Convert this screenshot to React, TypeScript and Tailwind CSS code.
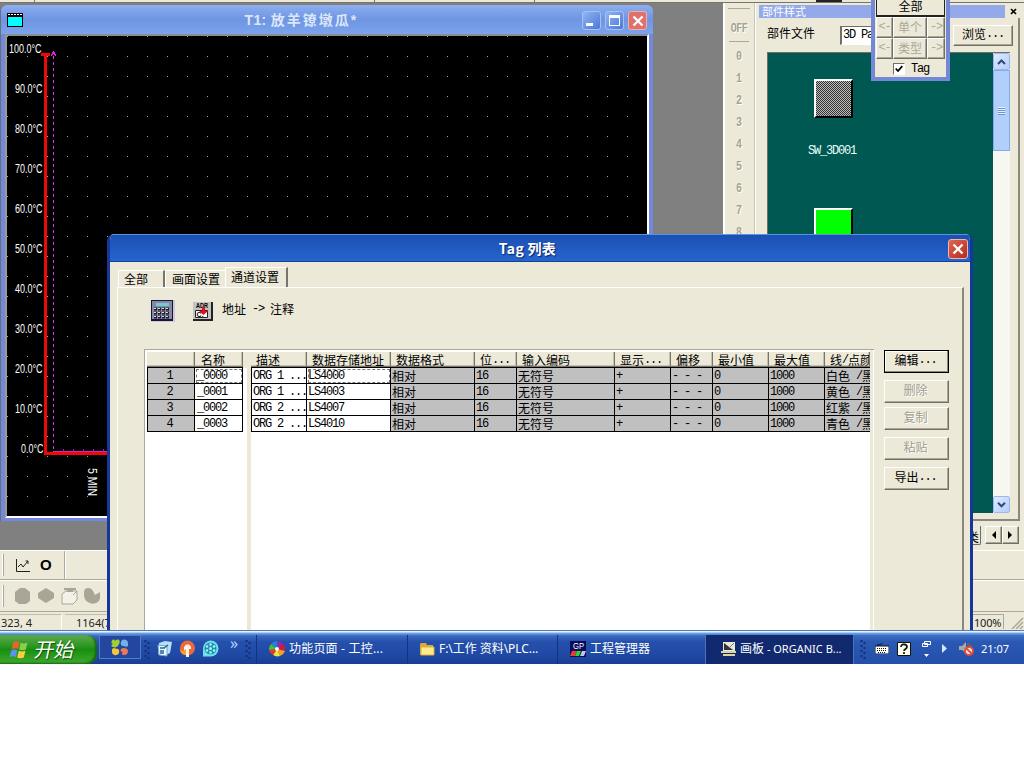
import React from "react";

const CJK = "font-['Liberation_Mono','Noto_Sans_CJK_SC',monospace]";
const RAISED =
  "border border-t-white border-l-white border-r-[#716f64] border-b-[#716f64] shadow-[inset_-1px_-1px_0_#aca899]";

/** Song-style text: 12px full-width characters with 6px half-width ones. */
function Song({ children, className = "" }: { children: string; className?: string }) {
  const runs = children.match(/[\x00-\x7f]+|[^\x00-\x7f]+/g) ?? [];
  return (
    <span className={`inline-flex shrink-0 items-center whitespace-pre leading-[14px] ${className}`}>
      {runs.map((run, i) =>
        /^[\x00-\x7f]/.test(run) ? (
          <span key={i} className="pt-px font-['Liberation_Mono',monospace] text-[12px] leading-[13px] tracking-[-1.2px]">{run}</span>
        ) : (
          <span key={i} className="font-['Noto_Sans_CJK_SC',sans-serif] text-[12px]">{run}</span>
        )
      )}
    </span>
  );
}

function Cross({ className = "" }: { className?: string }) {
  return (
    <svg viewBox="0 0 12 12" className={className}>
      <path d="M1.5 1.5 10.5 10.5M10.5 1.5 1.5 10.5" stroke="#fff" strokeWidth="2.3" />
    </svg>
  );
}

const SCALE = ["100.0", "90.0", "80.0", "70.0", "60.0", "50.0", "40.0", "30.0", "20.0", "10.0", "0.0"];

function TrendChart() {
  return (
    <svg width="640" height="480" viewBox="0 0 640 480" className="block bg-black">
      <defs>
        <pattern id="dots" width="20" height="20" patternUnits="userSpaceOnUse">
          <rect width="1" height="1" fill="#a8a89c" />
        </pattern>
      </defs>
      <rect width="640" height="480" fill="url(#dots)" />
      <g fill="#fff" fontFamily="Liberation Sans, sans-serif" fontSize="12">
        {SCALE.map((s, i) => (
          <text
            key={s}
            x={i === 0 ? 2 : i === 10 ? 14 : 8}
            y={17 + i * 40}
            textLength={i === 0 ? 32.5 : i === 10 ? 22.5 : 27.5}
            lengthAdjust="spacingAndGlyphs"
          >
            {`${s}°C`}
          </text>
        ))}
        <text transform="translate(81 432) rotate(90)" textLength="28" lengthAdjust="spacingAndGlyphs">5 MIN</text>
      </g>
      <g shapeRendering="crispEdges" fill="none">
        <path d="M34 18.5h9M38.5 18v401M37 417.5h65" stroke="#f00808" strokeWidth="3" />
        <path d="M46.5 20v394" stroke="#e030e8" strokeDasharray="3 3" />
        <path d="M46 415.5h56" stroke="#e020d0" />
        <path d="M46 15.500h1M45 16.500h3M45 17.500h3M44 18.500h2M47 18.500h2M44 19.500h1M48 19.500h1" stroke="#e020e0" />
        <path d="M56.5 413v4M66.5 413v4M76.5 413v4M86.5 413v4M96.5 413v4" stroke="#b018b0" />
      </g>
    </svg>
  );
}

function TrendWindow() {
  const btn = "flex h-[19px] w-[19px] rounded-[3px] border border-[#a9c0f3] bg-gradient-to-br from-[#8fb5f4] to-[#4c78d6]";
  return (
    <div className="mt-[2px] h-[516px] w-[653px] rounded-t-[6px] border-l border-[#6b6f78] bg-[#7288dc]">
      <div className="flex h-[29px] items-center rounded-t-[6px] bg-gradient-to-b from-[#8caef0] via-[#6f95e2] to-[#7aa4ec] pl-[6px] pr-[6px]">
        <svg width="16" height="14" viewBox="0 0 16 14">
          <path d="M0 0h16v14H0z" fill="#000" />
          <path d="M1 4h14v9H1z" fill="#0ff" />
          <path d="M1 1.5h14" stroke="#fff" strokeDasharray="2 1" />
        </svg>
        <div className="flex-1 whitespace-pre pr-[4px] pt-[2px] text-center font-['Liberation_Sans','Noto_Sans_CJK_SC',sans-serif] text-[14px] font-bold tracking-[0.3px] text-[#dce7fb]">
          T1: <span className="tracking-[2px]">放羊镣墩瓜</span>*
        </div>
        <div className="flex gap-[4px] pt-[2px]">
          <div className={`${btn} items-end pb-[3px] pl-[3px]`}><div className="h-[3px] w-[7px] bg-white" /></div>
          <div className={`${btn} items-center justify-center`}><div className="h-[11px] w-[11px] border border-t-[3px] border-white" /></div>
          <div className="flex h-[19px] w-[19px] items-center justify-center rounded-[3px] border border-[#f0b0a8] bg-[#e0706c]"><Cross className="h-[12px] w-[12px]" /></div>
        </div>
      </div>
      <div className="ml-[4px] w-[644px] border-b-2 border-l-2 border-r-2 border-t-2 border-b-white border-l-[#9a9a94] border-r-white border-t-[#8c8f92]">
        <TrendChart />
      </div>
    </div>
  );
}

function StateColumn() {
  return (
    <div className="flex h-full w-[32px] shrink-0 flex-col items-center border-l-2 border-r border-l-white border-r-[#c9c5b2] pr-px pt-[5px] font-['Liberation_Mono',monospace] text-[10px] font-bold text-[#a5a293]">
      <div className="h-px w-[22px] bg-[#aca899]" />
      <div className="mt-[7px] flex h-[24px] items-center"><span className="scale-y-125 tracking-[-0.5px] [text-shadow:1px_1px_0_#fff]">OFF</span></div>
      <div className="mb-[4px] mt-px h-px w-[20px] bg-[#aca899]" />
      {["0", "1", "2", "3", "4", "5", "6", "7", "8", "9"].map((n) => (
        <div key={n} className="-mt-px mb-px flex h-[22px] items-center"><span className="scale-y-125 [text-shadow:1px_1px_0_#fff]">{n}</span></div>
      ))}
    </div>
  );
}

function ScrollButton({ down = false }: { down?: boolean }) {
  return (
    <div className="flex h-[17px] w-[17px] items-center justify-center rounded-[2px] border border-[#9ab8ee] bg-gradient-to-br from-[#e0ebfe] to-[#b4cdf8]">
      <svg width="9" height="6" viewBox="0 0 9 6"><path d={down ? "M1 .8 4.5 4.3 8 .8" : "M1 5 4.5 1.5 8 5"} fill="none" stroke="#2b4a86" strokeWidth="2" /></svg>
    </div>
  );
}

function PartsPanel() {
  return (
    <div className="flex h-[547px] w-[269px] flex-col border-l border-white pl-[3px]">
      <div className="mt-[2px] flex h-[13px] items-center">
        <div className="flex h-[13px] w-[246px] items-center bg-[#93a9ea] pl-[3px]">
          <span className="font-['Noto_Sans_CJK_SC',sans-serif] text-[11px] leading-[13px] text-white">部件样式</span>
        </div>
        <svg width="7" height="7" viewBox="0 0 7 7" className="ml-[5px]"><path d="M1 1 6 6M6 1 1 6" stroke="#000" strokeWidth="1.7" /></svg>
      </div>
      <div className="flex h-[503px] w-[261px] flex-col border-b-2 border-r-2 border-b-[#8b887b] border-r-[#8b887b] pl-[8px]">
        <div className="flex h-[34px] items-center">
          <Song className="-mt-[4px] w-[73px]">部件文件</Song>
          <div className="flex h-[19px] w-[80px] items-center overflow-hidden border border-l-2 border-[#716f64] border-b-white border-r-white bg-white pl-[1px]"><Song>3D Parts</Song></div>
          <div className={`ml-[33px] flex h-[21px] w-[60px] items-center justify-center pb-[2px] ${RAISED}`}><Song>浏览...</Song></div>
        </div>
        <div className="flex h-[461px] w-[243px] border-l border-t border-[#716f64]">
          <div className="flex w-[225px] flex-col bg-[#005852] pl-[46px] pt-[26px]">
            <div className="h-[39px] w-[39px] border-2 border-b-black border-l-white border-r-black border-t-white bg-[#777] bg-[conic-gradient(#333_25%,#bdbdbd_0_50%,#333_0_75%,#bdbdbd_0)] bg-[length:2px_2px]" />
            <Song className="-ml-[6px] mt-[26px] text-[#e8fffa]">SW_3D001</Song>
            <div className="mt-[50px] h-[39px] w-[39px] border-2 border-b-black border-l-white border-r-black border-t-white bg-[#00ff00]" />
          </div>
          <div className="flex w-[17px] flex-col justify-between bg-[#f7f7f2]">
            <div>
              <ScrollButton />
              <div className="flex h-[81px] w-[17px] flex-col items-center justify-center border border-[#88a9ec] bg-[#b1cffb]">
                {[0, 1, 2, 3].map((i) => <div key={i} className="h-[2px] w-[7px] border-b border-[#6f92d8] bg-[#e6f0ff]" />)}
              </div>
            </div>
            <ScrollButton down />
          </div>
        </div>
      </div>
      <div className="mt-[5px] flex h-[20px] items-start">
        <div className="ml-[204px] h-[19px] w-[18px] overflow-hidden rounded-b-[2px] border-b border-r border-[#716f64]"><Song className="pl-[4px]">类</Song></div>
        <div className="ml-[4px] flex h-[18px]">
          <div className={`flex w-[17px] items-center justify-center ${RAISED}`}><svg width="5" height="8"><path d="M5 0v8L1 4z" /></svg></div>
          <div className={`flex w-[17px] items-center justify-center ${RAISED}`}><svg width="5" height="8"><path d="M0 0v8l4-4z" /></svg></div>
        </div>
      </div>
    </div>
  );
}

function Palette() {
  const cell = `flex h-full items-center justify-center text-[#aca899] pb-px ${RAISED}`;
  return (
    <div className="absolute left-[871px] top-0 h-[81px] w-[79px] border-x-4 border-b-4 border-[#7488d8] bg-[#ece9d8] px-px">
      <div className="flex h-[17px] items-center justify-center border-x border-b-2 border-[#222] bg-[#ece9d8] pb-[3px]"><Song>全部</Song></div>
      {["单个", "类型"].map((t) => (
        <div key={t} className="flex h-[21px] w-[69px]">
          <div className={`${cell} w-[17px]`}><Song>{"<-"}</Song></div>
          <div className={`${cell} w-[34px]`}><Song>{t}</Song></div>
          <div className={`${cell} w-[18px]`}><Song>{"->"}</Song></div>
        </div>
      ))}
      <div className="flex h-[18px] items-center pl-[17px] pt-[2px]">
        <div className="flex h-[12px] w-[12px] items-center justify-center border border-l-[#716f64] border-t-[#716f64] border-b-white border-r-white bg-white">
          <svg width="8" height="8" viewBox="0 0 8 8"><path d="M.7 3.5 3 6 7.3 1.2" fill="none" stroke="#000" strokeWidth="1.8" /></svg>
        </div>
        <Song className="ml-[6px]">Tag</Song>
      </div>
    </div>
  );
}

function AppFooter() {
  return (
    <div className="flex h-[80px] flex-col border-t border-white bg-[#ece9d8]">
      <div className="flex h-[29px] items-center border-b border-[#aca899]">
        <div className="ml-[2px] h-[22px] w-[2px] border-r border-[#aca899] bg-white" />
        <svg width="14" height="13" viewBox="0 0 14 13" className="ml-[12px]"><path d="M.5 0v12.5H14M2 8l3-3 2 3 5-6M9.500 2H12v3" fill="none" stroke="#222" /></svg>
        <span className="ml-[10px] w-[24px] font-['Liberation_Sans',sans-serif] text-[15px] font-bold leading-[16px]">O</span>
        <div className="h-full w-[2px] border-r border-white bg-[#aca899]" />
      </div>
      <div className="flex h-[32px] items-center border-b border-[#aca899] border-t border-t-white">
        <div className="ml-[2px] h-[22px] w-[2px] border-r border-[#aca899] bg-white" />
        <svg width="104" height="18" viewBox="0 0 104 18" className="ml-[10px]" fill="#aaa697">
          <path d="M1 5 6 1h5l5 4v9l-4 3H5l-4-3zM24 6l8-5 8 5v5l-8 5-8-5z" />
          <path d="M48 7l4-3h11v9l-4 4H48zM59 8l4-4" fill="#f4f2e8" stroke="#aaa697" />
          <path d="M50 1h12v2H50zM53 3h6v2h-6z" />
          <path d="M70 5c0-5 7-5 9-1l2 4 5-3v6c-1 6-8 7-12 4-4-2-4-6-4-10zM94 1h2v16h-2z" />
        </svg>
      </div>
      <div className="flex h-[18px] items-center font-['Noto_Sans','Open_Sans',sans-serif] text-[11px] leading-[14px] text-[#222]">
        <div className="flex h-[15px] w-[62px] items-center border-r border-t border-[#c1bda8] border-r-white pl-px pt-[2px]">323, 4</div>
        <div className="ml-[3px] flex h-[15px] w-[908px] items-center border-t border-[#c1bda8] pl-[11px] pt-[2px]">1164(734)</div>
        <div className="flex h-[15px] w-[31px] items-center border-r border-t border-[#aca899] pl-px pt-[2px] tracking-[-0.2px]">100%</div>
        <svg width="19" height="16" className="ml-px"><path d="M7 16 18 5M11 16l7-7M15 16l3-3" stroke="#aca899" strokeWidth="1.5" /></svg>
      </div>
    </div>
  );
}

const HEAD = ["描述", "数据存储地址", "数据格式", "位...", "输入编码", "显示...", "偏移", "最小值", "最大值", "线/点颜"];
const ROWS = [
  ["_0000", "ORG 1 ...", "LS4000", "白色 /黑"],
  ["_0001", "ORG 1 ...", "LS4003", "黄色 /黑"],
  ["_0002", "ORG 2 ...", "LS4007", "红紫 /黑"],
  ["_0003", "ORG 2 ...", "LS4010", "青色 /黑"],
];

function HeadCell({ text, className = "" }: { text: string; className?: string }) {
  return (
    <div className={`flex h-[15px] items-center overflow-x-clip border-b border-r border-[#77746a] bg-[#ece9d8] pt-px shadow-[inset_-1px_-1px_0_#c5c1ae] ${className}`}>
      <Song>{text}</Song>
    </div>
  );
}

function TagGrid() {
  return (
    <div className="flex h-[281px] w-[730px] border-l border-t border-[#aca899] bg-[#ece9d8]">
      <div className="flex w-[725px] bg-white pl-[2px] pt-[2px]">
        <div className="w-[96px]">
          <div className="grid grid-cols-[48px_48px]">
            <HeadCell text="" />
            <HeadCell text="名称" className="pl-[6px]" />
          </div>
          <div className="border-l border-t border-black">
            {ROWS.map((r, i) => (
              <div key={r[0]} className="grid h-[16px] grid-cols-[47px_48px]">
                <div className="flex items-center justify-center border-b border-r border-black bg-[#c0c0c0] pr-[3px]"><Song>{String(i + 1)}</Song></div>
                <div className={`flex items-center border-b border-r border-black pl-[2px] ${i === 0 ? "outline-1 outline-dashed -outline-offset-2 outline-[#777]" : ""}`}><Song>{r[0]}</Song></div>
              </div>
            ))}
          </div>
        </div>
        <div className="flex w-[8px] flex-col">
          <div className="h-[16px] bg-[#ece9d8]" />
          <div className="ml-[4px] w-[4px] flex-1 bg-[#ece9d8]" />
        </div>
        <div className="w-[619px] overflow-hidden">
          <div className="grid grid-cols-[56px_84px_84px_42px_98px_56px_42px_56px_56px_45px]">
            {HEAD.map((h) => <HeadCell key={h} text={h} className="pl-[5px]" />)}
          </div>
          <div className="border-l border-t border-black">
            {ROWS.map((r, i) => (
              <div key={r[0]} className="grid h-[16px] grid-cols-[55px_84px_84px_42px_98px_56px_42px_56px_56px_45px]">
                {[r[1], r[2], "相对", "16", "无符号", "+", "- - -", "0", "1000", r[3]].map((c, j) => (
                  <div
                    key={j}
                    className={`flex items-center overflow-x-clip border-b border-black pl-px ${j < 9 ? "border-r" : ""} ${j < 2 ? "bg-white" : "bg-[#c0c0c0]"} ${i === 0 && j === 1 ? "outline-1 outline-dashed -outline-offset-2 outline-[#777]" : ""}`}
                  >
                    <Song>{c}</Song>
                  </div>
                ))}
              </div>
            ))}
          </div>
        </div>
      </div>
      <div className="flex-1 border-r border-white" />
    </div>
  );
}

function SideButton({ text, off = false, first = false, className = "" }: { text: string; off?: boolean; first?: boolean; className?: string }) {
  return (
    <div className={`flex h-[23px] w-[65px] items-center justify-center pb-[3px] pr-[2px] ${first ? "border border-black shadow-[inset_-1px_-1px_0_#8b887b,inset_1px_1px_0_#fff]" : RAISED} ${off ? "text-[#a19d8e] [text-shadow:1px_1px_0_#fff]" : ""} ${className}`}>
      <Song>{text}</Song>
    </div>
  );
}

function TagDialog() {
  return (
    <div className="absolute left-[107px] top-[234px] h-[396px] w-[866px] overflow-hidden rounded-t-[7px] border-x-[3px] border-[#16379a] bg-[#ece9d8]">
      <div className="-mx-[3px] flex h-[28px] items-center border-b border-[#16409e] border-t border-t-[#5c92dc] bg-gradient-to-b from-[#1b50b4] to-[#2565ce] pr-[5px]">
        <div className="flex-1 text-center font-['Noto_Sans_CJK_SC',sans-serif] text-[14px] font-bold leading-[26px] tracking-[0.3px] text-white [text-shadow:1px_1px_1px_#0a246a]">Tag 列表</div>
        <div className="mt-px flex h-[20px] w-[20px] items-center justify-center rounded-[3px] border border-[#f2b7a5] bg-gradient-to-br from-[#e26450] to-[#b52a22]"><Cross className="h-[12px] w-[12px]" /></div>
      </div>
      <div className="flex h-[25px] items-end pl-[8px]">
        <div className="flex h-[17px] w-[47px] items-center border-l border-r-2 border-t border-l-white border-r-[#77746a] border-t-white pl-[5px]"><Song>全部</Song></div>
        <div className="flex h-[17px] w-[60px] items-center border-l border-t border-white pl-[6px]"><Song>画面设置</Song></div>
        <div className="flex h-[20px] w-[63px] items-center border-l border-r-2 border-t border-l-white border-r-[#77746a] border-t-white pb-[2px] pl-[5px]"><Song>通道设置</Song></div>
      </div>
      <div className="ml-[7px] flex h-[343px] w-[847px] flex-col border-l border-r-2 border-t border-l-white border-r-[#8b887b] border-t-white">
        <div className="flex h-[61px] pl-[33px] pt-[12px]">
          <svg width="24" height="22" viewBox="0 0 24 22">
            <path d="M0 0h24v22H0z" fill="#cdcbd0" /><path d="M0 0h22v21H0z" fill="#171345" />
            <path d="M1 1h20v18H1z" fill="#8588a0" />
            <path d="M5 3h13v3H5z" fill="#73cbd0" />
            <path d="M3 9h16M3 13h16M3 17h16" stroke="#1c1c28" strokeWidth="3" strokeDasharray="3 1" />
            <path d="M3 8.500h16M3 12.500h16M3 16.500h16" stroke="#d6d9e0" strokeDasharray="2 2" />
          </svg>
          <svg width="20" height="19" viewBox="0 0 20 19" className="ml-[18px] mt-[2px]">
            <path d="M0 0h20v19H0z" fill="#222" /><path d="M0 0h18v17H0z" fill="#c3c3c3" />
            <text x="3" y="6" fontFamily="Liberation Sans" fontWeight="bold" fontSize="6.500" textLength="12" lengthAdjust="spacingAndGlyphs">ADR</text>
            <path d="M2.500 8.500h12v7h-12z" fill="#fff" stroke="#222" />
            <text x="3.500" y="15" fontFamily="Liberation Sans" fontWeight="bold" fontSize="7">C:</text>
            <path d="M9 5h3v4h3l-4.500 4L6 9h3z" fill="#e60e18" />
          </svg>
          <Song className="ml-[9px] mt-[2px] self-start">{"地址 -> 注释"}</Song>
        </div>
        <div className="flex pl-[26px]">
          <TagGrid />
          <div className="ml-[10px] mt-px flex flex-col">
            <SideButton text="编辑..." first />
            <SideButton text="删除" off className="mt-[7px]" />
            <SideButton text="复制" off className="mt-[4px]" />
            <SideButton text="粘贴" off className="mt-[7px]" />
            <SideButton text="导出..." className="mt-[7px]" />
          </div>
        </div>
      </div>
    </div>
  );
}

function WinFlag({ className = "" }: { className?: string }) {
  return (
    <svg viewBox="0 0 18 18" className={className}>
      <path d="M4 2.500C6 1 8 1 10 2L8.500 8.500C6.500 7.500 4.500 7.500 2.500 9z" fill="#f0602c" />
      <path d="M11 2.500c2 1 4 1 6.500 0L16 9c-2 1-4 1-6.500 0z" fill="#88d04c" />
      <path d="M2.200 10C4.200 8.700 6 8.700 8 9.700L6.500 16C4.500 15 2.500 15 .5 16.500z" fill="#5c92f0" />
      <path d="M9.300 10.200c2 1 4 1 6.300 0L14 16.500c-2 1-4 1-6.300 0z" fill="#fbd038" />
    </svg>
  );
}

function Grip() {
  return (
    <svg width="6" height="22" viewBox="0 0 6 22" className="shrink-0">
      <path d="M1.500 2v20M4.500 4v18" stroke="#132f7b" strokeWidth="2" strokeDasharray="2 3" />
    </svg>
  );
}

function Taskbar() {
  const label = "whitespace-pre font-['Noto_Sans','Noto_Sans_CJK_SC',sans-serif] leading-[16px] text-white";
  return (
    <div className="flex h-[34px] w-full border-t border-[#4a7cc0] bg-[linear-gradient(#e4f0fc_0_1px,#7aa8e0_2px,#3968c0_5px,#2450ac_11px,#1f48a4_25px,#193c92)] pt-[4px]">
      <div className="flex w-[97px] items-center rounded-r-[10px] bg-gradient-to-b from-[#5aaa4a] via-[#169010] to-[#3fa82c] pb-px pl-[9px] shadow-[inset_-2px_-1px_2px_#17640f]">
        <WinFlag className="h-[19px] w-[19px]" />
        <span className="ml-[7px] skew-x-[-12deg] font-['Noto_Sans_CJK_SC',sans-serif] text-[20px] leading-[24px] text-white [text-shadow:1px_1px_1px_#0c4a08]">开始</span>
      </div>
      <div className="ml-[2px] flex h-[24px] w-[42px] items-center justify-center border border-[#4d7cc8] bg-[#23479e]">
        <svg width="18" height="17" viewBox="0 0 18 17">
          <path d="M1 2c0-2 3-2 3 0 3-3 6-1 4 3-1 3-4 4-6 3-2 0-2-3 0-3-2-1-2-2-1-3z" fill="#a1d02f" />
          <path d="M10 3c1-4 7-3 7 1v3c-1 1-3 1-4 0-2 0-4-1-3-4z" fill="#75b0ee" />
          <path d="M1 11c0-2 3-3 4-1 2-1 4 1 3 4-1 3-7 3-7-1z" fill="#f4c639" />
          <path d="M10 10c2-2 7-1 7 2s-2 4-4 4-3-2-1-3c-2 0-3-1-2-3z" fill="#ef7950" />
        </svg>
      </div>
      <div className="ml-[3px] flex w-[108px] items-center pb-[2px]">
        <Grip />
        <svg width="17" height="17" viewBox="0 0 17 17" className="ml-[6px]"><path d="M3 3 9 1l7 1-2 11-6 3-6-2z" fill="#b9e1f6" /><path d="m2 5 9 1v10l-8-1z" fill="#f2f8fb" stroke="#68a5ce" /><path d="M4 8h5M4 11h4M4 13h4M8 8l4-3" stroke="#1f659f" strokeWidth="1.500" /></svg>
        <svg width="17" height="17" viewBox="0 0 17 17" className="ml-[6px]"><circle cx="8.500" cy="8" r="7.500" fill="#ef6837" /><path d="M5 10c-1-7 8-7 7-1L10 9v8H7v-6z" fill="#fff4e1" /><path d="M1 9c2 3 4 2 6 0v6c-3 0-6-2-6-6z" fill="#f6a12c" /></svg>
        <svg width="17" height="17" viewBox="0 0 17 17" className="ml-[6px]"><path d="M8.500 .5a8 8 0 1 1 0 16H1V8a8 8 0 0 1 7.500-7.500z" fill="#6ce2ef" /><circle cx="8.500" cy="8.500" r="6" fill="#238db0" /><g fill="#a4f4fb"><circle cx="8.500" cy="8.500" r="1.500" /><circle cx="8.500" cy="4.500" r="1.300" /><circle cx="12" cy="6.500" r="1.300" /><circle cx="12" cy="10.500" r="1.300" /><circle cx="8.500" cy="12.500" r="1.300" /><circle cx="5" cy="10.500" r="1.300" /><circle cx="5" cy="6.500" r="1.300" /></g></svg>
        <span className="-mt-[12px] ml-[11px] w-[15px] font-['Noto_Sans',sans-serif] text-[16px] leading-none text-[#b9d3ff]">»</span>
        <Grip />
      </div>
      <div className="ml-[4px] flex w-[151px] items-center border-l border-[#143184] pb-[2px] pl-[12px]">
        <svg width="16" height="16" viewBox="0 0 16 16">
          <path d="M8 8V0a8 8 0 0 1 6 3z" fill="#8c2ca7" /><path d="M8 8l6-5a8 8 0 0 1 2 7z" fill="#d31745" /><path d="M8 8l8 2a8 8 0 0 1-5 5z" fill="#f8a220" /><path d="M8 8l3 7a8 8 0 0 1-7-1z" fill="#f1e436" /><path d="M8 8l-4 6a8 8 0 0 1-4-5z" fill="#e13b25" /><path d="M8 8 0 9a8 8 0 0 1 2-6z" fill="#56b734" /><path d="M8 8 2 3a8 8 0 0 1 6-3z" fill="#1785dc" /><circle cx="8" cy="8" r="2" fill="#fff" />
        </svg>
        <span className={`${label} ml-[4px] text-[12px] tracking-[0.2px]`}>功能页面 - 工控...</span>
      </div>
      <div className="flex w-[150px] items-center border-l border-[#143184] pb-[2px] pl-[11px]">
        <svg width="16" height="14" viewBox="0 0 16 14"><path d="M1 2 2 1h5l1 2h6v10H1z" fill="#dba93b" /><path d="M2 5h13v8H2z" fill="#fdec8a" stroke="#e3ac38" /></svg>
        <span className={`${label} ml-[4px] text-[12px] tracking-[-0.05px]`}>F:\工作 资料\PLC...</span>
      </div>
      <div className="flex w-[148px] items-center border-l border-[#143184] pb-[2px] pl-[12px]">
        <svg width="16" height="16" viewBox="0 0 16 16"><path d="M0 0h16v16H0z" fill="#09095e" /><text x="3" y="8" fill="#fff" fontFamily="Liberation Sans" fontSize="8.500" textLength="11" lengthAdjust="spacingAndGlyphs">GP</text><path d="M2 10h5l-2 5H0z" fill="#f03932" /><path d="M7 10h4l-2 5H5z" fill="#22d738" /><path d="M12 10h4l-2 5h-4z" fill="#bfc8d9" /></svg>
        <span className={`${label} ml-[4px] text-[12px]`}>工程管理器</span>
      </div>
      <div className="flex w-[149px] items-center border-l border-r border-[#4b72bd] bg-[#10296f] pb-[2px] pl-[15px]">
        <svg width="15" height="14" viewBox="0 0 15 14"><path d="M2 0h12v10H2z" fill="#e8e8db" /><path d="m3 1 9 7H3z" fill="#343438" /><path d="m8 6 5-5" stroke="#777" /><path d="M0 9h15v2H0zM2 12h12v2H2z" fill="#d9d4a2" /></svg>
        <span className={`${label} ml-[4px] text-[11px]`}><span className="text-[12px]">画板</span> - ORGANIC B...</span>
      </div>
      <div className="flex flex-1 items-center bg-[linear-gradient(#3d70c6,#2a58b2_7px,#234faa)] pb-[2px] pl-[6px]">
        <Grip />
        <svg width="14" height="11" viewBox="0 0 14 11" className="ml-[9px]"><path d="M2 3c0-3 5 0 5-3" fill="none" stroke="#111" /><path d="M0 3h14v8H0z" fill="#fff" stroke="#111" /><path d="M2 5.500h10M2 7.500h10M3 9.500h8" stroke="#111" strokeDasharray="1 1" /></svg>
        <svg width="14" height="14" viewBox="0 0 14 14" className="ml-[8px]"><path d="M.5.5h13v13H.5z" fill="#fffee8" stroke="#111" /><path d="M4 5c0-4 6-3 6 0 0 2-3 2-3 4M7 10v2" fill="none" stroke="#111" strokeWidth="1.700" /></svg>
        <svg width="9" height="18" viewBox="0 0 9 18" className="ml-[11px]"><path d="M2.500 1.500h6v3h-6zM.5 3.500h5v3h-5z" fill="#2857ae" stroke="#fff" /><path d="M2 14h5l-2.500 3z" fill="#fff" /></svg>
        <svg width="5" height="9" viewBox="0 0 5 9" className="ml-[11px]"><path d="M0 0v9l5-4.500z" fill="#d7e7ff" /></svg>
        <svg width="15" height="14" viewBox="0 0 15 14" className="ml-[12px]"><path d="M0 4h3l4-4v11L3 8H0z" fill="#a6a7a8" /><path d="M8 2c4 0 5 3 4 6" fill="none" stroke="#6e5e64" strokeWidth="2" /><circle cx="10" cy="9" r="4" fill="#eee" stroke="#e34d3d" strokeWidth="2" /><path d="m7 6 6 6" stroke="#e34d3d" strokeWidth="2" /></svg>
        <span className={`${label} ml-[7px] text-[11px]`}>21:07</span>
      </div>
    </div>
  );
}

export default function App() {
  return (
    <div className={`h-[768px] w-[1024px] overflow-hidden bg-white text-black ${CJK}`}>
      <div className="relative h-[630px] overflow-hidden bg-[#ece9d8]">
        <div className="flex h-[3px] items-end border-b border-[#77746a]">
          <div className="h-[2px] w-[35px] border-r border-[#77746a]" />
          <div className="h-[2px] w-[340px] border-r border-[#77746a]" />
          <div className="h-[2px] w-[160px] border-r border-[#77746a]" />
          <div className="ml-[281px] h-[2px] w-[26px] bg-[#222]" />
        </div>
        <div className="flex h-[547px]">
          <div className="h-full w-[723px] bg-[#808080]"><TrendWindow /></div>
          <StateColumn />
          <PartsPanel />
        </div>
        <AppFooter />
        <Palette />
        <TagDialog />
      </div>
      <Taskbar />
    </div>
  );
}
